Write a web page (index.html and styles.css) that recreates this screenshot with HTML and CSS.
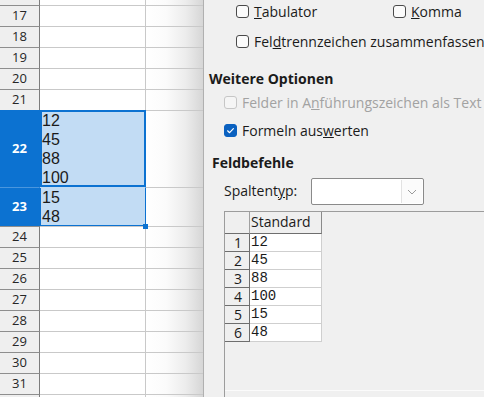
FILE: index.html
```html
<!DOCTYPE html>
<html lang="de">
<head>
    <meta charset="UTF-8">
    <meta name="viewport" content="width=device-width, initial-scale=1.0">
    <title>Textimport</title>
    <link rel="stylesheet" href="styles.css">
</head>
<body>
    <div class="screen">
        <div class="sheet">
            <div class="row row-cut-top"><div class="rh"></div><div class="cell"></div><div class="cell shade"></div></div>
            <div class="row"><div class="rh">17</div><div class="cell"></div><div class="cell shade"></div></div>
            <div class="row"><div class="rh">18</div><div class="cell"></div><div class="cell shade"></div></div>
            <div class="row"><div class="rh">19</div><div class="cell"></div><div class="cell shade"></div></div>
            <div class="row"><div class="rh">20</div><div class="cell"></div><div class="cell shade"></div></div>
            <div class="row"><div class="rh">21</div><div class="cell"></div><div class="cell shade"></div></div>
            <div class="row row-tall"><div class="rh rh-sel">22</div><div class="cell cell-cursor">12<br>45<br>88<br>100</div><div class="cell shade"></div></div>
            <div class="row row-mid"><div class="rh rh-sel rh-sel-next">23</div><div class="cell cell-range">15<br>48<span class="fill-handle"></span></div><div class="cell shade"></div></div>
            <div class="row"><div class="rh">24</div><div class="cell"></div><div class="cell shade"></div></div>
            <div class="row"><div class="rh">25</div><div class="cell"></div><div class="cell shade"></div></div>
            <div class="row"><div class="rh">26</div><div class="cell"></div><div class="cell shade"></div></div>
            <div class="row"><div class="rh">27</div><div class="cell"></div><div class="cell shade"></div></div>
            <div class="row"><div class="rh">28</div><div class="cell"></div><div class="cell shade"></div></div>
            <div class="row"><div class="rh">29</div><div class="cell"></div><div class="cell shade"></div></div>
            <div class="row"><div class="rh">30</div><div class="cell"></div><div class="cell shade"></div></div>
            <div class="row"><div class="rh">31</div><div class="cell"></div><div class="cell shade"></div></div>
            <div class="row row-cut-bottom"><div class="rh"></div><div class="cell"></div><div class="cell shade"></div></div>
        </div>

        <div class="dialog">
            <div class="opt-row opt-first indent-sep">
                <label class="check check-wide"><span class="cb"></span><span><u>T</u>abulator</span></label>
                <label class="check"><span class="cb"></span><span><u>K</u>omma</span></label>
            </div>
            <div class="opt-row opt-merge indent-sep">
                <label class="check"><span class="cb"></span><span>Fel<u>d</u>trennzeichen zusammenfassen</span></label>
            </div>

            <h3 class="group-title title-more">Weitere Optionen</h3>
            <div class="opt-row opt-quoted indent-opt">
                <label class="check disabled"><span class="cb"></span><span>Felder in A<u>n</u>führungszeichen als Text</span></label>
            </div>
            <div class="opt-row opt-formula indent-opt">
                <label class="check"><span class="cb checked"><svg width="13" height="13" viewBox="0 0 13 13"><path d="M3.6 6.8 L5.6 8.7 L9.4 4.6" fill="none" stroke="#fff" stroke-width="1.2" stroke-linecap="round" stroke-linejoin="round"/></svg></span><span>Formeln aus<u>w</u>erten</span></label>
            </div>

            <h3 class="group-title title-fields">Feldbefehle</h3>
            <div class="coltype-row">
                <span class="coltype-label">Spaltent<u>y</u>p:</span>
                <div class="combo">
                    <div class="combo-value"></div>
                    <div class="combo-btn"><svg width="10" height="6" viewBox="0 0 10 6"><path d="M1 1 L5 5 L9 1" fill="none" stroke="#9a9a9a" stroke-width="1"/></svg></div>
                </div>
            </div>

            <div class="preview">
                <div class="preview-grid">
                    <div class="pv-corner"></div>
                    <div class="pv-head">Standard</div>
                    <div class="pv-num">1</div><div class="pv-cell">12</div>
                    <div class="pv-num">2</div><div class="pv-cell">45</div>
                    <div class="pv-num">3</div><div class="pv-cell">88</div>
                    <div class="pv-num">4</div><div class="pv-cell">100</div>
                    <div class="pv-num">5</div><div class="pv-cell">15</div>
                    <div class="pv-num">6</div><div class="pv-cell">48</div>
                </div>
                <div class="preview-scroll"></div>
            </div>
        </div>
    </div>
</body>
</html>
```

FILE: styles.css
```css
* {
    box-sizing: border-box;
}
body {
    margin: 0;
    padding: 0;
    overflow: hidden;
    background-color: #f0f0f0;
}
.screen {
    display: flex;
    width: 484px;
    height: 397px;
}

/* spreadsheet */
.sheet {
    width: 203px;
    flex-shrink: 0;
    background-color: #fff;
}
.row {
    display: grid;
    grid-template-columns: 40px 106px 57px;
    height: 21px;
}
.row-cut-top {
    height: 5px;
}
.row-cut-top .rh,
.row-cut-top .cell {
    border-top: none;
}
.row-cut-bottom {
    height: 3px;
}
.row-tall {
    height: 77px;
}
.row-mid {
    height: 39px;
}
.rh {
    background-color: #efefef;
    border-top: 1px solid #8e8e8e;
    border-right: 1px solid #7c7c7c;
    font-family: "Open Sans", sans-serif;
    font-size: 13px;
    color: #262626;
    display: flex;
    align-items: center;
    justify-content: center;
    line-height: 1;
    padding-bottom: 1px;
}
.rh-sel {
    background-color: #0c72d1;
    border-top-color: #0c72d1;
    border-right-color: #0c72d1;
    color: #fff;
    font-weight: bold;
}
.rh-sel-next {
    border-top-color: #4a96de;
}
.cell {
    border-top: 1px solid #c9c9c9;
    border-right: 1px solid #c9c9c9;
    font-family: "Liberation Sans", Arial, sans-serif;
    font-size: 16px;
    line-height: 19px;
    color: #1a1a1a;
    padding-left: 2px;
}
.shade {
    border-right: none;
    background: linear-gradient(to right, #ffffff 0%, #fbfbfb 35%, #ececec 70%, #d6d6d6 100%);
}
.cell-cursor {
    background-color: #c2dcf4;
    border-top-color: #0c72d1;
    border-right-color: #0c72d1;
    box-shadow: inset 2px 0 0 #0c72d1, inset -1px 0 0 #0c72d1, inset 0 -2px 0 #0c72d1, inset 0 1px 0 #0c72d1;
}
.cell-range {
    position: relative;
    background-color: #c2dcf4;
    border-top-color: #c2dcf4;
    border-right-color: #0c72d1;
    box-shadow: inset 1px 0 0 #0c72d1, inset 0 -1px 0 #0c72d1;
}
.fill-handle {
    position: absolute;
    right: -3px;
    bottom: -3px;
    width: 5px;
    height: 5px;
    background-color: #0c72d1;
}

/* dialog */
.dialog {
    flex: 1;
    display: flex;
    flex-direction: column;
    background-color: #f0f0f0;
    border-left: 1px solid #b0b0b0;
    font-family: "Open Sans", sans-serif;
    font-size: 14px;
    color: #1b1b1b;
    white-space: nowrap;
    overflow: hidden;
}
.opt-row {
    display: flex;
    align-items: center;
    height: 23px;
    line-height: 20px;
}
.indent-sep {
    padding-left: 32px;
}
.indent-opt {
    padding-left: 20px;
}
.opt-merge {
    margin-top: 7px;
}
.opt-quoted {
    margin-top: 2px;
}
.opt-formula {
    margin-top: 5px;
}
.check {
    display: flex;
    align-items: center;
    gap: 5px;
}
.check-wide {
    width: 157px;
}
.cb {
    width: 13px;
    height: 13px;
    border: 1px solid #4a4a4a;
    border-radius: 3px;
    background-color: #fbfbfb;
    flex-shrink: 0;
}
.cb svg {
    display: block;
    margin: -1px;
}
.cb.checked {
    background-color: #0a61c0;
    border-color: #0a61c0;
}
.disabled {
    color: #a2a2a2;
}
.disabled .cb {
    border-color: #c6c6c6;
    background-color: #f5f5f5;
}
.group-title {
    margin: 0;
    font-size: 14px;
    font-weight: bold;
    line-height: 20px;
    height: 20px;
}
.title-more {
    margin-top: 16px;
    padding-left: 5px;
}
.title-fields {
    margin-top: 11px;
    padding-left: 8px;
}
.coltype-row {
    display: flex;
    align-items: center;
    height: 27px;
    margin-top: 5px;
    padding-left: 20px;
}
.coltype-label {
    width: 87px;
    padding-bottom: 3px;
}
.combo {
    display: flex;
    width: 113px;
    height: 27px;
    border: 1px solid #8a8a8a;
    border-radius: 2px;
    background-color: #fff;
}
.combo-value {
    flex: 1;
}
.combo-btn {
    width: 21px;
    margin: 1px 1px 1px 0;
    border-left: 1px solid #e2e2e2;
    background-color: #fbfbfb;
    display: flex;
    align-items: center;
    justify-content: center;
}

/* preview table */
.preview {
    flex: 1;
    display: flex;
    flex-direction: column;
    margin-top: 6px;
    margin-left: 20px;
    border-top: 1px solid #9c9c9c;
    border-left: 1px solid #9c9c9c;
}
.preview-grid {
    display: grid;
    grid-template-columns: 25px 72px;
    grid-template-rows: 22px repeat(6, 18px);
}
.pv-corner {
    background-color: #efefef;
    border-right: 1px solid #a0a0a0;
    border-bottom: 1px solid #6e6e6e;
}
.pv-head {
    background-color: #efefef;
    border-right: 1px solid #8a8a8a;
    border-bottom: 1px solid #6e6e6e;
    font-size: 14px;
    line-height: 20px;
    padding-left: 1px;
}
.pv-num {
    background-color: #efefef;
    border-right: 1px solid #6e6e6e;
    border-bottom: 1px solid #6e6e6e;
    font-size: 14px;
    line-height: 14px;
    display: flex;
    align-items: flex-end;
    justify-content: center;
    padding-left: 2px;
    padding-bottom: 1px;
    overflow: hidden;
}
.pv-cell {
    background-color: #fff;
    border-right: 1px solid #cfcfcf;
    border-bottom: 1px solid #cfcfcf;
    font-family: "Liberation Mono", monospace;
    font-size: 14px;
    line-height: 14px;
    padding-left: 1px;
    padding-top: 1px;
}
.preview-scroll {
    margin-top: auto;
    height: 7px;
    border-top: 1px solid #fbfbfb;
}
```
